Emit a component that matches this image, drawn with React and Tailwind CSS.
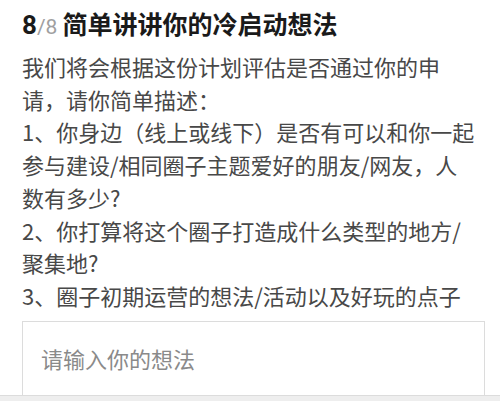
export default function App() {
  const lines = [
    "我们将会根据这份计划评估是否通过你的申",
    "请，请你简单描述：",
    "1、你身边（线上或线下）是否有可以和你一起",
    "参与建设/相同圈子主题爱好的朋友/网友，人",
    "数有多少?",
    "2、你打算将这个圈子打造成什么类型的地方/",
    "聚集地?",
    "3、圈子初期运营的想法/活动以及好玩的点子",
  ];
  return (
    <div
      className="w-[500px] h-[401px] bg-white overflow-hidden flex flex-col"
      style={{ fontFamily: '"Noto Sans CJK SC", "Noto Sans", sans-serif' }}
    >
      <div className="px-[22px] pt-[8px] flex items-baseline leading-[30px] whitespace-nowrap">
        <span className="text-[26px] font-bold text-[#1a1a1a] font-[Roboto,sans-serif]">8</span>
        <span className="text-[21px] text-[#a0a0a0] mr-[5px] font-[Roboto,sans-serif]">/8</span>
        <span className="text-[25px] font-bold text-[#1a1a1a]">简单讲讲你的冷启动想法</span>
      </div>
      <div className="px-[22px] mt-[8px] text-[22px] leading-[32.7px] text-[#484848]">
        {lines.map((l, i) => (
          <div key={i} className="whitespace-nowrap">{l}</div>
        ))}
      </div>
      <div className="pl-[22px] pr-[15px] mt-[9px] flex-1 flex flex-col">
        <div className="flex-1 border border-b-0 border-[#dcdcdc] pl-[18px] pt-[19px] text-[22px] leading-[34px] text-[#8a8a8a]">
          请输入你的想法
        </div>
      </div>
      <div className="h-[6px] bg-[#eeeeee] border-t border-[#dcdcdc]"></div>
    </div>
  );
}
